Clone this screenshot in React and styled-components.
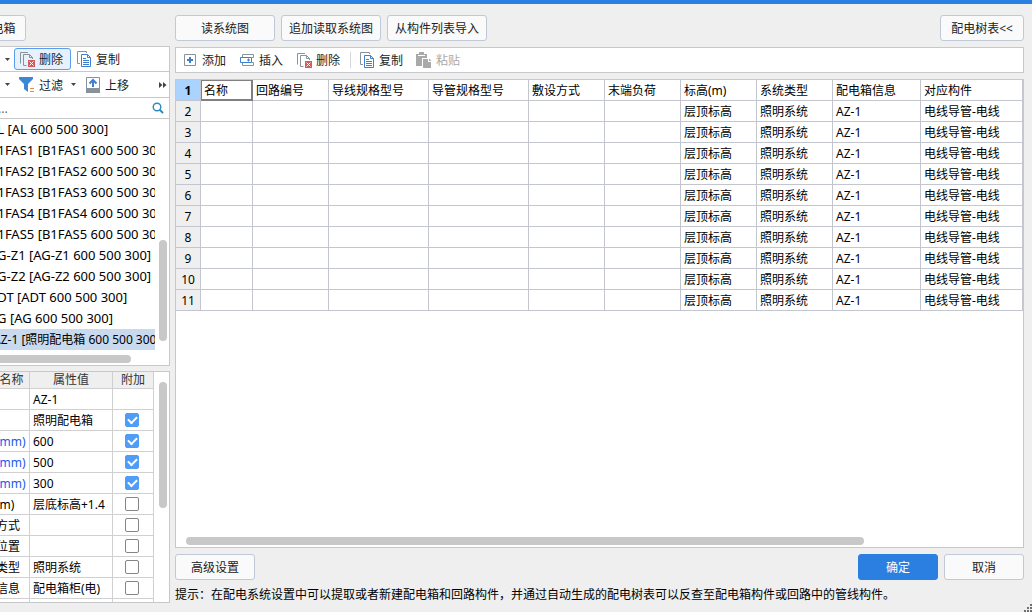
import React from 'react';
import styled, { createGlobalStyle, ThemeProvider, css } from 'styled-components';

const theme = {
  colors: {
    accent: '#2b7fe0',
    page: '#efefef',
    white: '#ffffff',
    black: '#000000',
    text: '#222222',
    border: '#c6c8cc',
    buttonBorder: '#c0c9d8',
    gridLine: '#c3c6ce',
    propLine: '#d0d0d0',
    header: '#efefef',
    scroll: '#c8c8c8',
    selected: '#c9d9ee',
    link: '#2457f0',
    disabled: '#a9a9a9'
  }
};

const GlobalStyle = createGlobalStyle`
  * {
    box-sizing: border-box;
  }
  body {
    background: ${theme.colors.page};
    color: ${theme.colors.black};
    font-family: 'Noto Sans', 'Noto Sans CJK SC', sans-serif;
    font-size: 12px;
    line-height: 16px;
    margin: 0;
  }
  button, input {
    font: inherit;
  }
`;

const Window = styled.div`
  border-top: 4px solid ${props => props.theme.colors.accent};
  display: flex;
  gap: 5px;
  height: 100vh;
  overflow: hidden;
  padding-right: 8px;
`;

/* the side pane is wider than its slot and is cut off on the left */
const Side = styled.aside`
  display: flex;
  flex: 0 0 170px;
  justify-content: flex-end;
  overflow: hidden;
`;

const SideInner = styled.div`
  display: flex;
  flex: 0 0 201px;
  flex-direction: column;
  padding: 11px 0 9px;
`;

const Main = styled.main`
  display: flex;
  flex: 1;
  flex-direction: column;
  min-width: 0;
  padding: 11px 0 9px;
`;

const ButtonRow = styled.div`
  display: flex;
  gap: 6px;
`;

const BottomRow = styled(ButtonRow)`
  margin-top: 6px;
`;

const Spacer = styled.div`
  flex: 1;
`;

const Button = styled.button`
  background: ${props => (props.$primary ? props.theme.colors.accent : '#fafafa')};
  border: 1px solid ${props => (props.$primary ? props.theme.colors.accent : props.theme.colors.buttonBorder)};
  border-radius: 3px;
  color: ${props => (props.$primary ? props.theme.colors.white : props.theme.colors.text)};
  height: 26px;
  padding: 2px 0 0;
  white-space: nowrap;
  width: ${props => props.$width}px;
`;

const Panel = styled.section`
  background: ${props => props.theme.colors.white};
  border: 1px solid ${props => props.theme.colors.border};
  display: flex;
  flex-direction: column;
  margin-top: ${props => props.$top}px;
  min-height: 0;
  overflow: hidden;
  ${props =>
    props.$grow &&
    css`
      flex: 1;
    `}
`;

const Toolbar = styled.div`
  align-items: center;
  display: flex;
  gap: ${props => (props.$wide ? 2 : 0)}px;
  height: ${props => (props.$wide ? 24 : 25)}px;
  padding-left: ${props => (props.$wide ? 1 : 0)}px;
  ${props =>
    !props.$wide &&
    css`
      border-bottom: 1px solid ${props.theme.colors.border};
    `}
  & + & {
    height: 26px;
  }
`;

const Tool = styled.button`
  align-items: center;
  background: ${props => (props.$active ? '#e6f1fd' : 'transparent')};
  border: 1px solid ${props => (props.$active ? '#5a9cf0' : 'transparent')};
  border-radius: 3px;
  color: ${props => props.theme.colors.text};
  display: flex;
  flex: none;
  gap: 4px;
  height: 22px;
  padding: 0 ${props => (props.$wide ? 5 : 7)}px 0 4px;
  white-space: nowrap;
  &:disabled {
    color: ${props => props.theme.colors.disabled};
  }
`;

const ToolText = styled.span`
  padding-top: 2px;
`;

const MenuTool = styled.button`
  align-items: center;
  background: transparent;
  border: 0;
  display: flex;
  flex: 0 0 44px;
  height: 22px;
  justify-content: flex-end;
  padding: 0 4px;
`;

const ArrowTool = styled.button`
  align-items: center;
  background: transparent;
  border: 0;
  display: flex;
  flex: 0 0 9px;
  height: 22px;
  padding: 0;
`;

const MoreTool = styled(ArrowTool)`
  flex-basis: 10px;
  margin-left: auto;
`;

const Separator = styled.span`
  background: #d4d6da;
  height: 16px;
  margin: 0 1px 0 2px;
  width: 1px;
`;

const Search = styled.label`
  align-items: center;
  border-bottom: 1px solid ${props => props.theme.colors.border};
  display: flex;
  height: 21px;
  padding: 0 5px 0 4px;
`;

const SearchInput = styled.input`
  background: transparent;
  border: 0;
  flex: 1;
  height: 20px;
  min-width: 0;
  outline: 0;
  padding: 0;
  &::placeholder {
    color: #666666;
    opacity: 1;
  }
`;

const ScrollArea = styled.div`
  display: grid;
  flex: ${props => (props.$grow ? '1' : 'none')};
  grid-template-columns: minmax(0, 1fr) ${props => props.$track}px;
  min-height: 0;
`;

const List = styled.ul`
  list-style: none;
  margin: 0;
  overflow: hidden;
  padding: 0;
`;

const ListItem = styled.li`
  background: ${props => (props.$selected ? props.theme.colors.selected : 'transparent')};
  font-size: ${props => (props.$selected ? 12 : 13)}px;
  height: 21px;
  line-height: 21px;
  padding-left: ${props => (props.$selected ? 23 : 19)}px;
  white-space: nowrap;
`;

const VerticalBar = styled.div`
  background: ${props => props.theme.colors.scroll};
  border-radius: 4px;
  height: ${props => props.$length}px;
  justify-self: end;
  margin: ${props => props.$start}px 2px 0 0;
  width: 8px;
`;

const HorizontalTrack = styled.div`
  padding: ${props => props.$padding};
`;

const HorizontalBar = styled.div`
  background: ${props => props.theme.colors.scroll};
  border-radius: 4px;
  height: 8px;
  width: ${props => props.$size};
`;

const TableClip = styled.div`
  min-height: 0;
  overflow: hidden;
`;

const Table = styled.table`
  border-collapse: separate;
  border-spacing: 0;
  table-layout: fixed;
  width: 100%;
`;

const PropHead = styled.th`
  background: ${props => props.theme.colors.header};
  border: solid ${props => props.theme.colors.propLine};
  border-width: 0 1px 1px 0;
  color: #333333;
  font-weight: 400;
  height: 17px;
  line-height: 16px;
  padding: 0;
`;

const PropCell = styled.td`
  border: solid ${props => props.theme.colors.propLine};
  border-width: 0 1px 1px 0;
  color: ${props => (props.$link ? props.theme.colors.link : props.theme.colors.black)};
  height: 21px;
  line-height: 18px;
  padding: 2px 0 0 ${props => (props.$name ? 2 : 3)}px;
  white-space: nowrap;
`;

const CheckCell = styled(PropCell)`
  padding: 0;
`;

const Check = styled.input`
  appearance: none;
  background: ${props => props.theme.colors.white};
  border: 1px solid #858585;
  border-radius: 2px;
  display: grid;
  height: 14px;
  margin: 0 0 0 12px;
  place-items: center;
  width: 14px;
  &:checked {
    background: #509df8;
    border-color: #509df8;
  }
  &:checked:before {
    border: solid ${props => props.theme.colors.white};
    border-width: 0 0 2px 2px;
    content: '';
    height: 4px;
    margin-bottom: 3px;
    transform: rotate(-45deg);
    width: 7px;
  }
`;

const RowNumber = styled.th`
  background: ${props => (props.$selected ? '#abd3ff' : props.theme.colors.header)};
  border: solid ${props => props.theme.colors.gridLine};
  border-width: 0 1px 1px 0;
  font-weight: ${props => (props.$selected ? 700 : 400)};
  height: 21px;
  line-height: 18px;
  padding: 2px 0 0;
`;

const GridCell = styled.td`
  border: solid ${props => props.theme.colors.gridLine};
  border-width: 0 1px 1px 0;
  height: 21px;
  line-height: 18px;
  padding: 2px 0 0 3px;
  white-space: nowrap;
  ${props =>
    props.$current &&
    css`
      border-color: #808080;
      box-shadow: inset 0 0 0 1px #808080;
    `}
`;

const GridFill = styled.div`
  flex: 1;
  min-height: 0;
  overflow: hidden;
`;

const Hint = styled.p`
  margin: 7px 0 0;
  white-space: nowrap;
`;

const Grip = styled.svg`
  bottom: 0;
  position: absolute;
  right: 0;
`;

const DeleteIcon = () => (
  <svg width="16" height="16" viewBox="0 0 16 16" fill="none">
    <path d="M1.5 12.5V1.5H9M7.5 14.5H4.5V3.5H10.5L13.5 6.5V8M10.5 3.5V6.5H13.5" stroke="#87929b" />
    <rect x="9" y="9" width="7" height="7" fill="#d95757" />
    <path d="M10.5 10.5l4 4M14.5 10.5l-4 4" stroke="#fff" />
  </svg>
);

const CopyIcon = () => (
  <svg width="16" height="16" viewBox="0 0 16 16" fill="none">
    <path d="M4 12.5H1.5V.5H10.5V2" stroke="#87929b" />
    <path d="M5.5 3.5H11.5L14.5 6.5V15.5H5.5Z" fill="#fff" stroke="#3c80cf" />
    <path d="M11.5 3.5V6.5H14.5M7 7.5H10M7 9.5H13M7 11.5H13M7 13.5H13" stroke="#3c80cf" />
  </svg>
);

const AddIcon = () => (
  <svg width="16" height="16" viewBox="0 0 16 16" fill="none">
    <path d="M2.5 2.5H13.5V13.5H2.5Z" stroke="#87929b" />
    <path d="M8 5V11M5 8H11" stroke="#3c80cf" strokeWidth="2" />
  </svg>
);

const InsertIcon = () => (
  <svg width="16" height="16" viewBox="0 0 16 16" fill="none">
    <path d="M3.5 5V2.5H14.5V5.5H13M3.5 11V13.5H14.5V10.5H13" stroke="#87929b" />
    <path d="M1.5 5.5H12.5V10.5H1.5Z" fill="#fff" stroke="#3c80cf" />
    <path d="M9.5 6.5V9.5M8 8H11" stroke="#3c80cf" />
  </svg>
);

const PasteIcon = () => (
  <svg width="16" height="16" viewBox="0 0 16 16">
    <path d="M0 2H3V0H8V2H11V6H6V14H0Z" fill="#a9a9a9" />
    <path d="M2 3.5H9" stroke="#fff" />
    <path d="M7 7H12V10H15V16H7Z" fill="#a9a9a9" />
    <path d="M13 6.5L15.5 9H13Z" fill="#a9a9a9" />
  </svg>
);

const FilterIcon = () => (
  <svg width="16" height="16" viewBox="0 0 16 16">
    <path d="M0 0H14V2L9 7V15L5 12V7L0 2Z" fill="#3f85d6" />
    <path d="M11 11.5H15M11 14.5H15" stroke="#f08a32" />
  </svg>
);

const MoveUpIcon = () => (
  <svg width="16" height="16" viewBox="0 0 16 16" fill="none">
    <path d="M1.5 .5H14.5V15.5H1.5Z" stroke="#87929b" />
    <path d="M1 11H15V16H1Z" fill="#87929b" />
    <path d="M8 10V3M4.5 6.5L8 3L11.5 6.5" stroke="#3c80cf" strokeWidth="2" />
  </svg>
);

const SearchIcon = () => (
  <svg width="12" height="12" viewBox="0 0 12 12" fill="none" stroke="#2c8bbd">
    <circle cx="5" cy="5" r="3.8" strokeWidth="1.4" />
    <path d="M7.6 7.6L11 11" strokeWidth="2" />
  </svg>
);

const ArrowIcon = () => (
  <svg width="5" height="3" viewBox="0 0 5 3">
    <path d="M0 0H5L2.5 3Z" fill="#444" />
  </svg>
);

const MoreIcon = () => (
  <svg width="8" height="6" viewBox="0 0 8 6">
    <path d="M0 0L3.5 3L0 6ZM4 0L7.5 3L4 6Z" fill="#444" />
  </svg>
);

const boxes = [
  'AL [AL 600 500 300]',
  'B1FAS1 [B1FAS1 600 500 300]',
  'B1FAS2 [B1FAS2 600 500 300]',
  'B1FAS3 [B1FAS3 600 500 300]',
  'B1FAS4 [B1FAS4 600 500 300]',
  'B1FAS5 [B1FAS5 600 500 300]',
  'AG-Z1 [AG-Z1 600 500 300]',
  'AG-Z2 [AG-Z2 600 500 300]',
  'ADT [ADT 600 500 300]',
  'AG [AG 600 500 300]',
  'AZ-1 [照明配电箱 600 500 300]'
];

const properties = [
  { name: '名称', value: 'AZ-1' },
  { name: '类型', value: '照明配电箱', checked: true },
  { name: '宽度(mm)', value: '600', checked: true, link: true },
  { name: '高度(mm)', value: '500', checked: true, link: true },
  { name: '厚度(mm)', value: '300', checked: true, link: true },
  { name: '标高(m)', value: '层底标高+1.4', checked: false },
  { name: '敷设方式', value: '', checked: false },
  { name: '所在位置', value: '', checked: false },
  { name: '系统类型', value: '照明系统', checked: false },
  { name: '汇总信息', value: '配电箱柜(电)', checked: false },
  { name: '备注', value: '', checked: false }
];

const columns = [
  { title: '名称', width: 52 },
  { title: '回路编号', width: 76 },
  { title: '导线规格型号', width: 100 },
  { title: '导管规格型号', width: 100 },
  { title: '敷设方式', width: 76 },
  { title: '末端负荷', width: 76 },
  { title: '标高(m)', width: 76, value: '层顶标高' },
  { title: '系统类型', width: 76, value: '照明系统' },
  { title: '配电箱信息', width: 88, value: 'AZ-1' },
  { title: '对应构件', value: '电线导管-电线' }
];

const rowNumbers = [2, 3, 4, 5, 6, 7, 8, 9, 10, 11];

const BoxPanel = () => (
  <Panel $top={5}>
    <Toolbar>
      <MenuTool type="button" aria-label="新建">
        <ArrowIcon />
      </MenuTool>
      <Tool type="button" $active>
        <DeleteIcon />
        <ToolText>删除</ToolText>
      </Tool>
      <Tool type="button">
        <CopyIcon />
        <ToolText>复制</ToolText>
      </Tool>
    </Toolbar>
    <Toolbar>
      <MenuTool type="button" aria-label="存档">
        <ArrowIcon />
      </MenuTool>
      <Tool type="button">
        <FilterIcon />
        <ToolText>过滤</ToolText>
      </Tool>
      <ArrowTool type="button" aria-label="过滤选项">
        <ArrowIcon />
      </ArrowTool>
      <Tool type="button">
        <MoveUpIcon />
        <ToolText>上移</ToolText>
      </Tool>
      <MoreTool type="button" aria-label="更多">
        <MoreIcon />
      </MoreTool>
    </Toolbar>
    <Search>
      <SearchInput type="text" placeholder="搜索..." aria-label="搜索" />
      <SearchIcon />
    </Search>
    <ScrollArea $track={14}>
      <List>
        {boxes.map((box, i) => (
          <ListItem key={box} $selected={i === boxes.length - 1}>
            {box}
          </ListItem>
        ))}
      </List>
      <VerticalBar $start={121} $length={101} />
    </ScrollArea>
    <HorizontalTrack $padding="5px 0 2px">
      <HorizontalBar $size="161px" />
    </HorizontalTrack>
  </Panel>
);

const PropertyPanel = () => (
  <Panel $top={5} $grow>
    <ScrollArea $grow $track={15}>
      <TableClip>
        <Table>
          <colgroup>
            <col style={{ width: 60 }} />
            <col />
            <col style={{ width: 41 }} />
          </colgroup>
          <thead>
            <tr>
              <PropHead>属性名称</PropHead>
              <PropHead>属性值</PropHead>
              <PropHead>附加</PropHead>
            </tr>
          </thead>
          <tbody>
            {properties.map(({ name, value, checked, link }) => (
              <tr key={name}>
                <PropCell $name $link={link}>
                  {name}
                </PropCell>
                <PropCell>{value}</PropCell>
                <CheckCell>
                  {checked !== undefined && (
                    <Check type="checkbox" defaultChecked={checked} aria-label={name} />
                  )}
                </CheckCell>
              </tr>
            ))}
          </tbody>
        </Table>
      </TableClip>
      <VerticalBar $start={10} $length={126} />
    </ScrollArea>
  </Panel>
);

const CircuitGrid = () => (
  <Panel $top={6} $grow>
    <GridFill>
      <Table>
        <colgroup>
          <col style={{ width: 25 }} />
          {columns.map(({ title, width }) => (
            <col key={title} style={{ width }} />
          ))}
        </colgroup>
        <tbody>
          <tr>
            <RowNumber scope="row" $selected>
              1
            </RowNumber>
            {columns.map(({ title }, i) => (
              <GridCell key={title} $current={i === 0}>
                {title}
              </GridCell>
            ))}
          </tr>
          {rowNumbers.map(number => (
            <tr key={number}>
              <RowNumber scope="row">{number}</RowNumber>
              {columns.map(({ title, value }) => (
                <GridCell key={title}>{value}</GridCell>
              ))}
            </tr>
          ))}
        </tbody>
      </Table>
    </GridFill>
    <HorizontalTrack $padding="0 10px 2px">
      <HorizontalBar $size="82%" />
    </HorizontalTrack>
  </Panel>
);

const App = () => (
  <ThemeProvider theme={theme}>
    <GlobalStyle />
    <Window>
      <Side>
        <SideInner>
          <ButtonRow>
            <Button type="button" $width={57}>
              配电箱
            </Button>
          </ButtonRow>
          <BoxPanel />
          <PropertyPanel />
        </SideInner>
      </Side>
      <Main>
        <ButtonRow>
          <Button type="button" $width={100}>
            读系统图
          </Button>
          <Button type="button" $width={100}>
            追加读取系统图
          </Button>
          <Button type="button" $width={100}>
            从构件列表导入
          </Button>
          <Spacer />
          <Button type="button" $width={84}>
            配电树表&lt;&lt;
          </Button>
        </ButtonRow>
        <Panel $top={6}>
          <Toolbar $wide>
            <Tool type="button" $wide>
              <AddIcon />
              <ToolText>添加</ToolText>
            </Tool>
            <Tool type="button" $wide>
              <InsertIcon />
              <ToolText>插入</ToolText>
            </Tool>
            <Tool type="button" $wide>
              <DeleteIcon />
              <ToolText>删除</ToolText>
            </Tool>
            <Separator />
            <Tool type="button" $wide>
              <CopyIcon />
              <ToolText>复制</ToolText>
            </Tool>
            <Tool type="button" $wide disabled>
              <PasteIcon />
              <ToolText>粘贴</ToolText>
            </Tool>
          </Toolbar>
        </Panel>
        <CircuitGrid />
        <BottomRow>
          <Button type="button" $width={80}>
            高级设置
          </Button>
          <Spacer />
          <Button type="button" $width={80} $primary>
            确定
          </Button>
          <Button type="button" $width={80}>
            取消
          </Button>
        </BottomRow>
        <Hint>
          提示：在配电系统设置中可以提取或者新建配电箱和回路构件，并通过自动生成的配电树表可以反查至配电箱构件或回路中的管线构件。
        </Hint>
      </Main>
      <Grip width="8" height="8" viewBox="0 0 8 8" fill="#707070">
        <path d="M6 0h2v2H6zM3 3h2v2H3zM6 3h2v2H6zM0 6h2v2H0zM3 6h2v2H3zM6 6h2v2H6z" />
      </Grip>
    </Window>
  </ThemeProvider>
);

export default App;
